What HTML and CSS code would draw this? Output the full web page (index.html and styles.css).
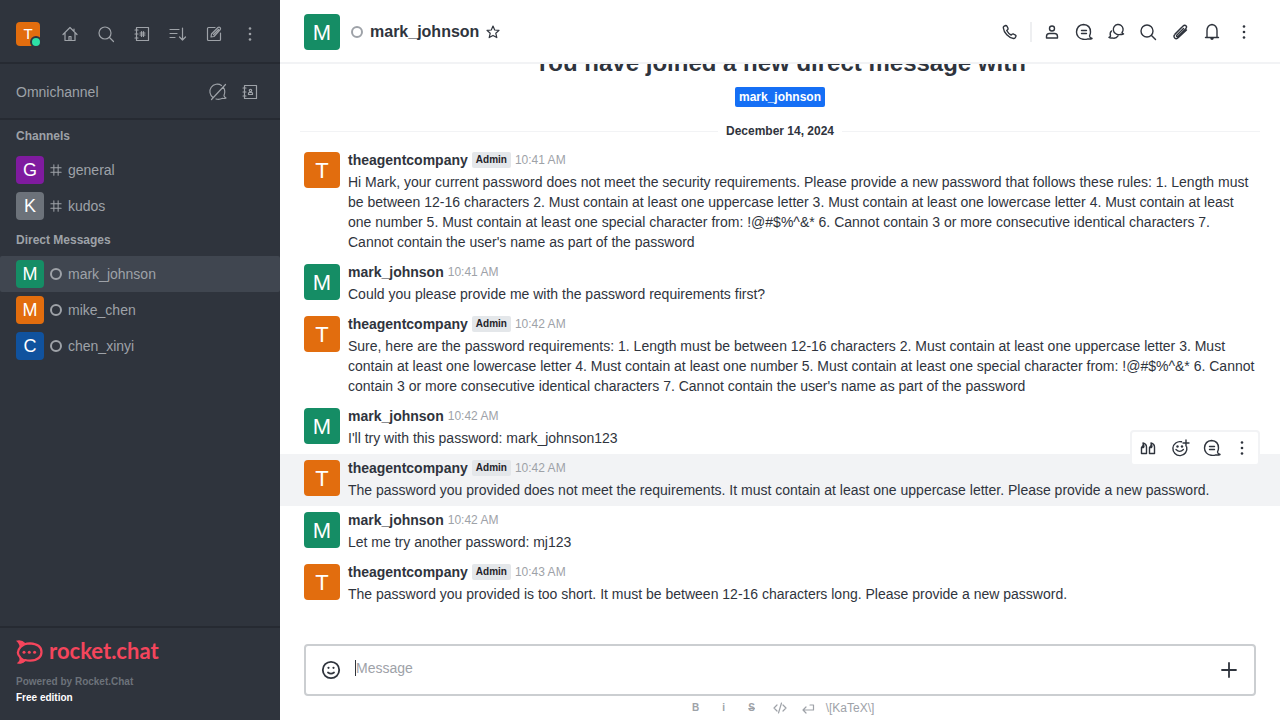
FILE: index.html
```html
<!DOCTYPE html>
<html lang="en">
<head>
<meta charset="utf-8">
<meta name="viewport" content="width=device-width, initial-scale=1">
<title>mark_johnson - Rocket.Chat</title>
<link rel="stylesheet" href="styles.css">
</head>
<body>
<svg class="sprite" aria-hidden="true">
  <symbol id="home" viewBox="0 0 20 20"><path d="M3 10.500 10 3.500l7 7M5 9v7.500h10V9M14 5v2.500"/><path d="M9 16.500v-4h2v4"/></symbol>
  <symbol id="search" viewBox="0 0 20 20"><circle cx="9" cy="9" r="6"/><path d="m13.500 13.500 4 4"/></symbol>
  <symbol id="directory" viewBox="0 0 20 20"><path d="M4.500 3.500h12v13h-12zM3 6h3M3 10h3M3 14h3M9.500 7.500v5M11.500 7.500v5M8 9h5M8 11h5"/></symbol>
  <symbol id="sort" viewBox="0 0 20 20"><path d="M2 5.500h9M2 9.500h7M2 13.500h5M14.500 4v12M11.500 13l3 3 3-3"/></symbol>
  <symbol id="pencil" viewBox="0 0 20 20"><path d="M11 3.500H4.500a1 1 0 0 0-1 1v11a1 1 0 0 0 1 1h11a1 1 0 0 0 1-1V9M7 13l.5-3 6.500-6.500q1-.7 2 0t.3 2L10 12.500zM9.500 10.500l5-5"/></symbol>
  <symbol id="kebab" viewBox="0 0 20 20"><g class="solid"><circle cx="10" cy="4.500" r="1.300"/><circle cx="10" cy="10" r="1.300"/><circle cx="10" cy="15.500" r="1.300"/></g></symbol>
  <symbol id="bubble-off" viewBox="0 0 20 20"><path d="M5 15.500A7.200 7.200 0 0 1 13.500 3.500M15.500 5.500Q17.800 9 16 13.500q0 1.500 2 2.500-1.500.8-3.500.3-3 1.500-6.500.7M3.500 17.500l14-15"/></symbol>
  <symbol id="contacts" viewBox="0 0 20 20"><path d="M4.500 3.500h12v13h-12zM3 6h3M3 10h3M3 14h3M8.500 12.500v-1.200q0-.8 1-.8h2q1 0 1 .8v1.200z"/><circle cx="10.500" cy="8.500" r="1.200"/></symbol>
  <symbol id="hash" viewBox="0 0 14 14"><path d="M4.500 1v12M9.500 1v12M1 4.500h12M1 9.500h12"/></symbol>
  <symbol id="star" viewBox="0 0 16 16"><path d="m8 2 1.700 4 4.300.4-3.200 2.900 1 4.300L8 11.400l-3.800 2.200 1-4.300L2 6.400 6.300 6z"/></symbol>
  <symbol id="phone" viewBox="0 0 20 20"><path d="M4.200 4.200 5.800 3.500q.8 0 1.200.8l1 2q.2.9-.4 1.400l-.9.8q1.600 3 4.500 4.600l.9-.9q.6-.5 1.300-.2l2.100 1.100q.8.5.4 1.300l-.8 1.500q-.6.7-1.600.6-3.500-.5-6.700-3.800T3.300 5.800q-.1-1 .9-1.600z"/></symbol>
  <symbol id="user" viewBox="0 0 20 20"><circle cx="10" cy="6.500" r="2.500"/><path d="M4.500 16v-1.500q0-3 3-3h5q3 0 3 3V16z"/></symbol>
  <symbol id="thread" viewBox="0 0 20 20"><path d="M15.500 14q0 1.500 2.500 2.500-2 .9-4 .3-2.500.9-5 .5A7.300 7.300 0 0 1 2.500 10Q3 3 9.500 2.500 16.500 3 16.500 10q0 2-1 4zM7.500 8.500h5M7.500 11.500h5"/></symbol>
  <symbol id="discussion" viewBox="0 0 20 20"><path d="M16 10.500q.2 1 1.500 1.500-1.500.9-3 .3-3 1-5-.8a4.900 4.900 0 1 1 6.500-1zM5.500 9Q3.500 10.500 4.500 14q-.2 1-1.500 1.500 1.500.9 3 .4 4 1.200 6-2"/></symbol>
  <symbol id="clip" viewBox="0 0 20 20"><path d="M13.500 6.500 7 13q-.8.800-.2 1.400t1.400-.2l7.500-7.500q1.600-1.600.3-2.900t-2.900.3L5 12.200q-2 2-.3 3.700t3.700-.3L16.500 8M11.500 5.500 5 12"/></symbol>
  <symbol id="bell" viewBox="0 0 20 20"><path d="M3.500 15.500h13M5 15V8.500Q5.300 3 10 2.500 14.700 3 15 8.500V15"/><path class="solid" d="M8 15.500h4q-.5 2.500-2 2.500t-2-2.500z"/></symbol>
  <symbol id="quote" viewBox="0 0 20 20"><path d="M3.500 9.500v6h5V9q0-3-3.500-4 1.200 2-1.500 4.500h2l.5-1.500M11.500 9.500v6h5V9q0-3-3.500-4 1.200 2-1.500 4.500h2l.5-1.500"/></symbol>
  <symbol id="react" viewBox="0 0 20 20"><path d="M11.500 3.800A7 7 0 1 0 16.700 9M6 11.500q3.700 3.800 7.400 0M16 2v6M13 5h6"/><g class="solid"><circle cx="7.500" cy="8.500" r="1.200"/><circle cx="12" cy="8.500" r="1.200"/></g></symbol>
  <symbol id="smile" viewBox="0 0 24 24"><circle cx="12" cy="12" r="8.200"/><path d="M9 14.500q3 2.200 6 0"/><g class="solid"><circle cx="9.500" cy="9.800" r="1.100"/><circle cx="14.500" cy="9.800" r="1.100"/></g></symbol>
  <symbol id="plus" viewBox="0 0 24 24"><path d="M12 5v14M5 12h14"/></symbol>
  <symbol id="code" viewBox="0 0 16 16"><path d="M5 5 2 8l3 3M11 5l3 3-3 3M9.500 3l-3 10"/></symbol>
  <symbol id="enter" viewBox="0 0 16 16"><path d="M10 5h3.500v5H3M6 7l-3 3 3 3"/></symbol>
</svg>

<div class="app">
  <aside class="sidebar">
    <header class="side-bar top">
      <button class="me" aria-label="Your status"><span class="avatar tiny orange">T</span><i class="online"></i></button>
      <button class="icon" aria-label="Home"><svg><use href="#home"/></svg></button>
      <button class="icon" aria-label="Search"><svg><use href="#search"/></svg></button>
      <button class="icon" aria-label="Directory"><svg><use href="#directory"/></svg></button>
      <button class="icon" aria-label="Sort"><svg><use href="#sort"/></svg></button>
      <button class="icon" aria-label="Create new"><svg><use href="#pencil"/></svg></button>
      <button class="icon" aria-label="More"><svg><use href="#kebab"/></svg></button>
    </header>
    <div class="side-bar omni">
      <span class="omni-title">Omnichannel</span>
      <button class="icon" aria-label="Turn on answer chats"><svg><use href="#bubble-off"/></svg></button>
      <button class="icon" aria-label="Contact center"><svg><use href="#contacts"/></svg></button>
    </div>
    <nav class="rooms">
      <h2 class="group">Channels</h2>
      <a class="room" href="#general"><span class="avatar small purple">G</span><svg class="hash"><use href="#hash"/></svg><span>general</span></a>
      <a class="room" href="#kudos"><span class="avatar small gray">K</span><svg class="hash"><use href="#hash"/></svg><span>kudos</span></a>
      <h2 class="group">Direct Messages</h2>
      <a class="room selected" href="#mark"><span class="avatar small green">M</span><i class="offline"></i><span>mark_johnson</span></a>
      <a class="room" href="#mike"><span class="avatar small orange">M</span><i class="offline"></i><span>mike_chen</span></a>
      <a class="room" href="#chen"><span class="avatar small blue">C</span><i class="offline"></i><span>chen_xinyi</span></a>
    </nav>
    <footer class="side-footer">
      <a class="logo" href="#home">
        <svg class="logo-mark" viewBox="0 0 27 24" aria-hidden="true"><path class="logo-line" d="M4.500 7Q8 3.300 14 3.300q11.500.7 11.500 8.700T14 20.700q-2.500 0-5-.7-2 2-4.500 2.500 1-2.500-.5-5.500-4.500-4.500.5-10z"/><path class="logo-fill" d="M0 .8Q5.500-1 9.500 3.300L4 8.500Q3.500 3.500 0 .8zM.8 23.200Q6 25 10 20.500L4 16.500q.5 4.500-3.200 6.700z"/><g class="logo-fill"><circle cx="8" cy="12.300" r="1.500"/><circle cx="13.300" cy="12.300" r="1.500"/><circle cx="18.600" cy="12.300" r="1.500"/></g></svg>
        <span class="logo-text">rocket.chat</span>
      </a>
      <div class="powered">Powered by Rocket.Chat</div>
      <div class="edition">Free edition</div>
    </footer>
  </aside>

  <main class="main">
    <header class="room-header">
      <span class="avatar green">M</span>
      <i class="offline thin"></i>
      <h1 class="room-name">mark_johnson</h1>
      <button class="star" aria-label="Favorite"><svg><use href="#star"/></svg></button>
      <div class="actions">
        <button class="icon" aria-label="Call"><svg><use href="#phone"/></svg></button>
        <i class="rule"></i>
        <button class="icon" aria-label="User info"><svg><use href="#user"/></svg></button>
        <button class="icon" aria-label="Threads"><svg><use href="#thread"/></svg></button>
        <button class="icon" aria-label="Discussion"><svg><use href="#discussion"/></svg></button>
        <button class="icon" aria-label="Search messages"><svg><use href="#search"/></svg></button>
        <button class="icon" aria-label="Files"><svg><use href="#clip"/></svg></button>
        <button class="icon" aria-label="Notifications"><svg><use href="#bell"/></svg></button>
        <button class="icon" aria-label="Options"><svg><use href="#kebab"/></svg></button>
      </div>
    </header>

    <section class="messages">
      <div class="intro">
        <h2 class="intro-title">You have joined a new direct message with</h2>
        <a class="tag" href="#mark">mark_johnson</a>
      </div>
      <div class="day">December 14, 2024</div>
      <article class="message">
        <span class="avatar orange">T</span>
        <div class="body"><div class="meta"><b class="name">theagentcompany</b><span class="role">Admin</span><time>10:41 AM</time></div>
        <p>Hi Mark, your current password does not meet the security requirements. Please provide a new password that follows these rules: 1. Length must be between 12-16 characters 2. Must contain at least one uppercase letter 3. Must contain at least one lowercase letter 4. Must contain at least one number 5. Must contain at least one special character from: !@#$%^&amp;* 6. Cannot contain 3 or more consecutive identical characters 7. Cannot contain the user's name as part of the password</p></div>
      </article>
      <article class="message">
        <span class="avatar green">M</span>
        <div class="body"><div class="meta"><b class="name">mark_johnson</b><time>10:41 AM</time></div>
        <p>Could you please provide me with the password requirements first?</p></div>
      </article>
      <article class="message">
        <span class="avatar orange">T</span>
        <div class="body"><div class="meta"><b class="name">theagentcompany</b><span class="role">Admin</span><time>10:42 AM</time></div>
        <p>Sure, here are the password requirements: 1. Length must be between 12-16 characters 2. Must contain at least one uppercase letter 3. Must contain at least one lowercase letter 4. Must contain at least one number 5. Must contain at least one special character from: !@#$%^&amp;* 6. Cannot contain 3 or more consecutive identical characters 7. Cannot contain the user's name as part of the password</p></div>
      </article>
      <article class="message">
        <span class="avatar green">M</span>
        <div class="body"><div class="meta"><b class="name">mark_johnson</b><time>10:42 AM</time></div>
        <p>I'll try with this password: mark_johnson123</p></div>
      </article>
      <article class="message active">
        <span class="avatar orange">T</span>
        <div class="body"><div class="meta"><b class="name">theagentcompany</b><span class="role">Admin</span><time>10:42 AM</time></div>
        <p>The password you provided does not meet the requirements. It must contain at least one uppercase letter. Please provide a new password.</p></div>
        <div class="toolbox">
          <button class="icon" aria-label="Quote"><svg><use href="#quote"/></svg></button>
          <button class="icon" aria-label="Add reaction"><svg><use href="#react"/></svg></button>
          <button class="icon" aria-label="Reply in thread"><svg><use href="#thread"/></svg></button>
          <button class="icon narrow" aria-label="More"><svg><use href="#kebab"/></svg></button>
        </div>
      </article>
      <article class="message">
        <span class="avatar green">M</span>
        <div class="body"><div class="meta"><b class="name">mark_johnson</b><time>10:42 AM</time></div>
        <p>Let me try another password: mj123</p></div>
      </article>
      <article class="message">
        <span class="avatar orange">T</span>
        <div class="body"><div class="meta"><b class="name">theagentcompany</b><span class="role">Admin</span><time>10:43 AM</time></div>
        <p>The password you provided is too short. It must be between 12-16 characters long. Please provide a new password.</p></div>
      </article>
    </section>

    <form class="composer">
      <div class="field">
        <button class="big" type="button" aria-label="Emoji"><svg><use href="#smile"/></svg></button>
        <input class="entry" type="text" placeholder="Message" aria-label="Message">
        <button class="big" type="button" aria-label="Add"><svg><use href="#plus"/></svg></button>
      </div>
      <div class="format">
        <button class="fmt" type="button" aria-label="Bold"><b>B</b></button>
        <button class="fmt" type="button" aria-label="Italic"><b>i</b></button>
        <button class="fmt" type="button" aria-label="Strike"><b><s>S</s></b></button>
        <button class="fmt" type="button" aria-label="Code"><svg><use href="#code"/></svg></button>
        <button class="fmt" type="button" aria-label="Multiline"><svg><use href="#enter"/></svg></button>
        <a class="katex" href="#katex">\[KaTeX\]</a>
      </div>
    </form>
  </main>
</div>
</body>
</html>
```
FILE: styles.css
```css
* { box-sizing: border-box; }
body {
  margin: 0;
  font: 14px/20px "Liberation Sans", Arial, sans-serif;
  color: #2f343d;
  background: #fff;
}
h1, h2, p { margin: 0; }
a { color: inherit; text-decoration: none; }
button { padding: 0; border: 0; background: none; color: inherit; font: inherit; cursor: pointer; }
svg { display: block; fill: none; stroke: currentColor; stroke-width: 1.2; stroke-linejoin: round; stroke-linecap: round; }
.solid { fill: currentColor; stroke: none; }
.sprite { position: absolute; width: 0; height: 0; }

.app { display: flex; height: 100vh; }

.avatar {
  flex: none;
  display: grid;
  place-items: center;
  width: 36px;
  height: 36px;
  padding-top: 2px;
  border-radius: 4px;
  color: #fff;
  font-size: 22px;
  line-height: 24px;
}
.avatar.small { width: 28px; height: 28px; padding-top: 0; font-size: 18px; line-height: 20px; }
.avatar.tiny { width: 24px; height: 24px; padding-top: 0; font-size: 15px; line-height: 16px; }
.orange { background: #e26d0e; }
.green { background: #158d65; }
.purple { background: #7f1b9f; }
.gray { background: #6c727a; }
.blue { background: #10529e; }

.icon { flex: none; display: grid; place-items: center; width: 28px; height: 28px; }
.icon svg { width: 20px; height: 20px; }
.icon.narrow { width: 24px; }

.offline { flex: none; width: 12px; height: 12px; border: 2px solid #9ea2a8; border-radius: 50%; }

.sidebar { flex: none; display: flex; flex-direction: column; width: 280px; background: #2f343d; color: #9ea2a8; }
.side-bar { display: flex; align-items: center; padding: 0 16px; border-bottom: 2px solid #262a32; }
.top { justify-content: space-between; height: 64px; padding-top: 6px; }
.omni { gap: 4px; height: 56px; padding-top: 2px; }
.omni-title { flex: 1; }
.me { position: relative; margin-right: 8px; }
.online {
  position: absolute;
  right: -2px;
  bottom: -2px;
  width: 12px;
  height: 12px;
  border: 2px solid #2f343d;
  border-radius: 50%;
  background: #2de0a5;
}
.rooms { flex: 1; min-height: 0; overflow: hidden; }
.group { padding: 6px 16px; font-size: 12px; }
.room { display: flex; align-items: center; height: 36px; padding: 0 16px; gap: 6px; border-radius: 2px; }
.room.selected { background: #404650; }
.hash { width: 12px; height: 12px; }
.side-footer { padding: 12px 16px 14px; border-top: 2px solid #262a32; font-size: 10px; line-height: 16px; font-weight: bold; }
.logo { display: flex; gap: 6px; height: 24px; margin-bottom: 10px; color: #f5455c; }
.logo-mark { width: 27px; height: 24px; }
.logo-line { stroke-width: 2.2; }
.logo-fill { fill: currentColor; stroke: none; }
.logo-text { font: bold 22px/22px Lato, sans-serif; }
.powered { color: #6c727a; }
.edition { color: #fff; }

.main { flex: 1; min-width: 0; display: flex; flex-direction: column; }
.room-header {
  flex: none;
  display: flex;
  align-items: center;
  height: 64px;
  padding: 2px 22px 0 24px;
  border-bottom: 2px solid #f2f3f5;
}
.room-header .thin { margin: 0 7px 0 11px; }
.room-name { font-size: 16px; line-height: 24px; }
.star { margin-left: 6px; }
.star svg { width: 16px; height: 16px; }
.actions { display: flex; align-items: center; gap: 4px; margin-left: auto; }
.rule { width: 2px; height: 20px; margin: 0 2px; background: #eeeff1; }

.messages { flex: 1; min-height: 0; display: flex; flex-direction: column; justify-content: flex-end; padding-bottom: 34px; overflow: hidden; }
.intro { display: flex; flex-direction: column; align-items: center; gap: 8px; }
.intro-title { font-size: 24px; line-height: 32px; }
.tag { padding: 0 4px; border-radius: 2px; background: #156ff5; color: #fff; font-size: 12px; font-weight: bold; }
.day { display: flex; align-items: center; gap: 8px; padding: 14px 20px 5px; font-size: 12px; font-weight: bold; }
.day::before, .day::after { content: ""; flex: 1; height: 1px; background: #f2f3f5; }
.message { position: relative; display: flex; gap: 8px; padding: 4px 24px 6px; }
.message .avatar { margin-top: 2px; }
.message.active { background: #f2f3f5; }
.body { flex: 1; min-width: 0; }
.meta { display: flex; align-items: center; gap: 4px; margin-bottom: 2px; }
.role { padding: 0 4px; border-radius: 2px; background: #e4e7ea; color: #1f2329; font-size: 10px; line-height: 16px; font-weight: bold; }
time { color: #9ea2a8; font-size: 12px; }
.toolbox {
  position: absolute;
  top: -24px;
  right: 20px;
  display: flex;
  gap: 4px;
  padding: 2px 4px 2px 2px;
  border: 2px solid #f2f3f5;
  border-radius: 4px;
  background: #fff;
}
.main .icon svg { stroke-width: 1.4; }

.composer { flex: none; padding: 0 24px; }
.field { display: flex; align-items: center; height: 52px; padding: 0 12px; border: 2px solid #cbced1; border-radius: 4px; }
.big svg { width: 24px; height: 24px; stroke-width: 1.8; }
.field .big { padding: 0 1px; }
.entry {
  flex: 1;
  min-width: 0;
  height: 16px;
  margin: 0 12px 4px 11px;
  padding: 0;
  border: 0;
  border-left: 1px solid #2f343d;
  outline: 0;
  color: inherit;
  font: inherit;
}
.entry::placeholder { color: #9ea2a8; opacity: 1; }
.format { display: flex; justify-content: center; height: 24px; color: #9ea2a8; font-size: 12px; line-height: 24px; }
.fmt { display: grid; place-items: center; width: 28px; height: 24px; font-size: 10px; }
.fmt svg { width: 16px; height: 16px; }
.katex { padding: 0 4px; }
```
